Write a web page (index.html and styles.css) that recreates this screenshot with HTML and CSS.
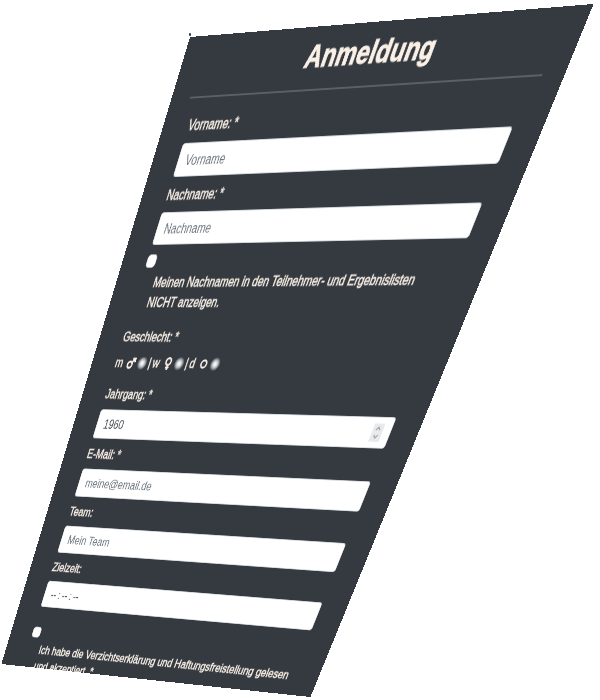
FILE: index.html
```html
<!DOCTYPE html>
<html lang="de">
<head>
<meta charset="utf-8">
<title>Anmeldung</title>
<link rel="stylesheet" href="styles.css">
</head>
<body>
<main class="stage">
  <form class="panel">
    <h1 class="title">Anmeldung</h1>
    <hr class="rule">
    <div class="fields">
      <div class="field">
        <label for="vorname">Vorname: *</label>
        <input class="control" id="vorname" type="text" placeholder="Vorname">
      </div>
      <div class="field">
        <label for="nachname">Nachname: *</label>
        <input class="control" id="nachname" type="text" placeholder="Nachname">
      </div>
      <div class="consent listing">
        <input class="tick" id="anonym" type="checkbox">
        <label for="anonym">Meinen Nachnamen in den Teilnehmer- und Ergebnislisten NICHT anzeigen.</label>
      </div>
      <fieldset class="gender">
        <legend>Geschlecht: *</legend>
        <div class="options">
          <label for="m">m
            <svg class="icon" viewBox="0 0 16 16"><circle cx="6" cy="10" r="3.9"/><path d="M9 7L13 3M9 2.5H13.7V7"/></svg></label>
          <input class="radio" id="m" type="radio" name="gender">
          <span>|</span>
          <label for="w">w
            <svg class="icon" viewBox="0 0 16 16"><circle cx="8" cy="5.5" r="4.2"/><path d="M8 9.7V16M5 13H11"/></svg></label>
          <input class="radio" id="w" type="radio" name="gender">
          <span>|</span>
          <label for="d">d
            <svg class="icon" viewBox="0 0 16 16"><circle cx="8" cy="8" r="4.5"/></svg></label>
          <input class="radio" id="d" type="radio" name="gender">
        </div>
      </fieldset>
      <div class="field">
        <label for="jahrgang">Jahrgang: *</label>
        <div class="stepper">
          <input class="control" id="jahrgang" type="number" value="1960">
          <svg class="spin" viewBox="0 0 15 22"><path d="M4.5 8L7.5 4.5L10.5 8M4.5 14L7.5 17.5L10.5 14"/></svg>
        </div>
      </div>
      <div class="field">
        <label for="email">E-Mail: *</label>
        <input class="control" id="email" type="email" placeholder="meine@email.de">
      </div>
      <div class="field">
        <label for="team">Team:</label>
        <input class="control" id="team" type="text" placeholder="Mein Team">
      </div>
      <div class="field">
        <label for="zielzeit">Zielzeit:</label>
        <input class="control" id="zielzeit" type="text" value="--&#8201;:&#8201;--&#8201;:&#8201;--">
      </div>
      <div class="consent terms">
        <input class="tick" id="verzicht" type="checkbox">
        <label for="verzicht">Ich habe die Verzichtserklärung und Haftungsfreistellung gelesen und akzeptiert. *</label>
      </div>
    </div>
  </form>
  <span class="speck"></span>
</main>
</body>
</html>
```
FILE: styles.css
```css
* { box-sizing: border-box; }

body {
  margin: 0;
  background: #fff;
  color: #faf0e6;
  font: 16px/24px "Liberation Sans", Arial, sans-serif;
}

.stage {
  position: relative;
  height: 100vh;
  overflow: hidden;
}

/* The whole form is a sheet tilted in perspective. */
.panel {
  width: 96vw;
  height: 795px;
  padding: 10px 30px 0;
  overflow: hidden;
  background: #343a40;
  transform-origin: 0 0;
  transform: matrix3d(0.592205, -0.058021, 0, -0.00018266, -0.236843, 0.963635, 0, 0.00026348, 0, 0, 1, 0, 190, 37, 0, 1);
}

.speck {
  position: absolute;
  left: 189px;
  top: 33px;
  width: 2px;
  height: 3px;
  border-radius: 1px;
  background: #343a40;
}

.title {
  margin: 0 0 15px;
  font-size: 34px;
  line-height: 40px;
  text-align: center;
  -webkit-text-stroke: 1px #faf0e6;
}

.rule {
  margin: 0 0 18px;
  border: 0;
  border-top: 2px solid #5c6063;
}

.fields { padding: 0 12px; }

.field { margin-bottom: 9px; }

label, legend, .options { -webkit-text-stroke: 1px rgba(250, 240, 230, 0.6); }

.field label {
  display: block;
  margin-bottom: 7px;
}

.control {
  display: block;
  width: 100%;
  height: 38px;
  padding: 7px 12px 5px;
  border: 1px solid #ced4da;
  border-radius: 4px;
  background: #fff;
  color: #495057;
  font: inherit;
  appearance: none;
}

.control::placeholder { color: #6c757d; opacity: 1; }

.control::-webkit-inner-spin-button { display: none; }

.stepper { position: relative; }

.spin {
  position: absolute;
  right: 13px;
  top: 8px;
  width: 16px;
  height: 22px;
  background: #e9eaeb;
  fill: none;
  stroke: #9a9da0;
  stroke-width: 1.5;
}

.consent {
  padding-top: 2px;
  margin-bottom: 18px;
}

.listing { padding-right: 24px; }

.consent label {
  display: block;
  margin-left: 23px;
  padding-top: 6px;
}

.tick {
  display: block;
  width: 16px;
  height: 16px;
  margin: 0;
  border: 1px solid #c4c4c4;
  border-radius: 5px;
  background: #fff;
  appearance: none;
}

.terms { padding-top: 20px; }

.gender {
  margin: 0 0 16px;
  padding: 0;
  border: 0;
}

.gender legend {
  padding: 0;
  margin-bottom: 8px;
}

.options {
  display: flex;
  align-items: center;
  gap: 3px;
}

.options label {
  display: flex;
  align-items: center;
  gap: 7px;
}

.icon {
  width: 16px;
  height: 16px;
  fill: none;
  stroke: #faf0e6;
  stroke-width: 2.6;
}

.radio {
  width: 16px;
  height: 16px;
  margin: 0;
  border-radius: 50%;
  background: radial-gradient(circle closest-side, #f4f5f6 20%, #b4b8bb 60%, #70757a 85%, #4a5056 100%);
  appearance: none;
}
```
